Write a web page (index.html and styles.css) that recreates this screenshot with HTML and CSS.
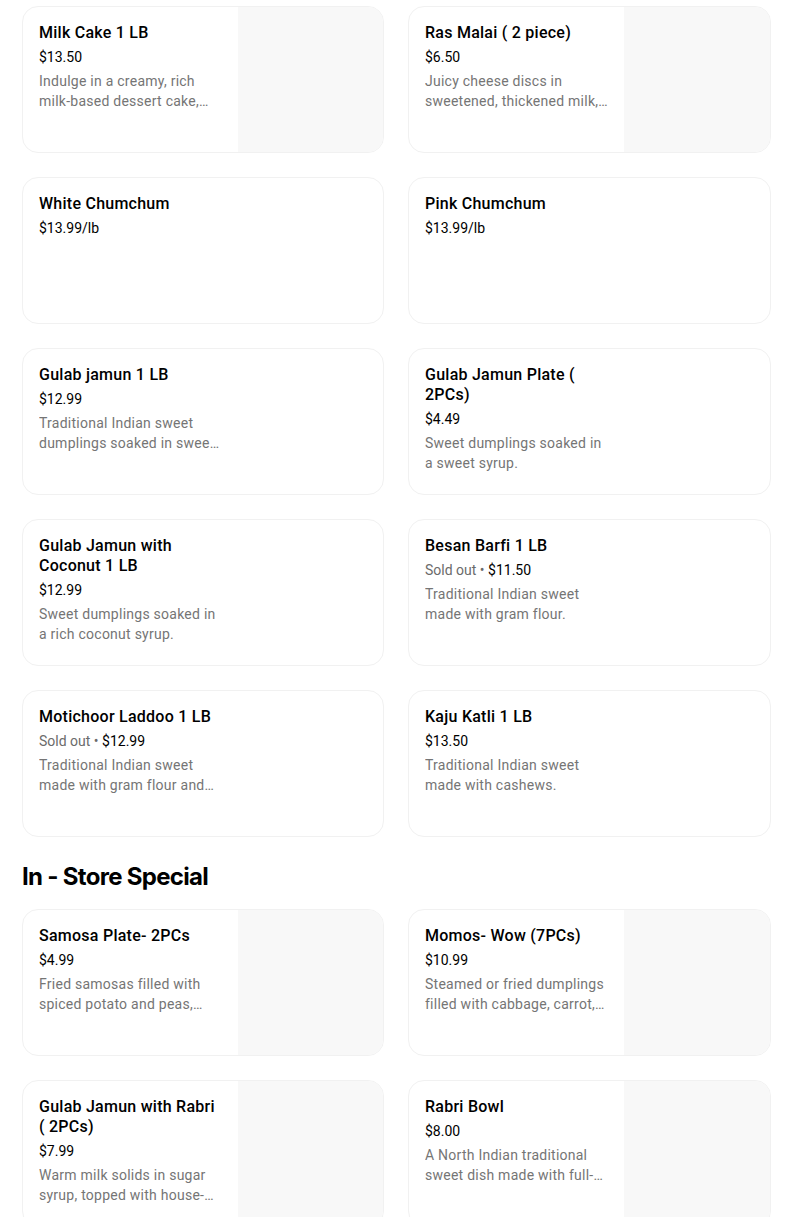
FILE: index.html
```html
<!DOCTYPE html>
<html>
<head>
<meta charset="utf-8">
<link rel="stylesheet" href="styles.css">
</head>
<body>
<div class="page">
  <div class="grid">
    <div class="card">
      <div class="info">
        <div class="title">Milk Cake 1 LB</div>
        <div class="price">$13.50</div>
        <div class="desc">Indulge in a creamy, rich milk-based dessert cake, made with slow-cooked milk and sugar.</div>
      </div>
      <div class="photo"></div>
    </div>
    <div class="card">
      <div class="info">
        <div class="title">Ras Malai ( 2 piece)</div>
        <div class="price">$6.50</div>
        <div class="desc">Juicy cheese discs in sweetened, thickened milk, flavored with cardamom.</div>
      </div>
      <div class="photo"></div>
    </div>
    <div class="card">
      <div class="info">
        <div class="title">White Chumchum</div>
        <div class="price">$13.99/lb</div>
      </div>
    </div>
    <div class="card">
      <div class="info">
        <div class="title">Pink Chumchum</div>
        <div class="price">$13.99/lb</div>
      </div>
    </div>
    <div class="card">
      <div class="info">
        <div class="title">Gulab jamun 1 LB</div>
        <div class="price">$12.99</div>
        <div class="desc">Traditional Indian sweet dumplings soaked in sweet syrup.</div>
      </div>
    </div>
    <div class="card">
      <div class="info">
        <div class="title">Gulab Jamun Plate ( 2PCs)</div>
        <div class="price">$4.49</div>
        <div class="desc">Sweet dumplings soaked in a sweet syrup.</div>
      </div>
    </div>
    <div class="card">
      <div class="info">
        <div class="title">Gulab Jamun with Coconut 1 LB</div>
        <div class="price">$12.99</div>
        <div class="desc">Sweet dumplings soaked in a rich coconut syrup.</div>
      </div>
    </div>
    <div class="card">
      <div class="info">
        <div class="title">Besan Barfi 1 LB</div>
        <div class="price"><span class="sold">Sold out • </span>$11.50</div>
        <div class="desc">Traditional Indian sweet made with gram flour.</div>
      </div>
    </div>
    <div class="card">
      <div class="info">
        <div class="title">Motichoor Laddoo 1 LB</div>
        <div class="price"><span class="sold">Sold out • </span>$12.99</div>
        <div class="desc">Traditional Indian sweet made with gram flour and sugar syrup.</div>
      </div>
    </div>
    <div class="card">
      <div class="info">
        <div class="title">Kaju Katli 1 LB</div>
        <div class="price">$13.50</div>
        <div class="desc">Traditional Indian sweet made with cashews.</div>
      </div>
    </div>
  </div>

  <h2 class="section-title">In - Store Special</h2>

  <div class="grid">
    <div class="card">
      <div class="info">
        <div class="title">Samosa Plate- 2PCs</div>
        <div class="price">$4.99</div>
        <div class="desc">Fried samosas filled with spiced potato and peas, served with chutney.</div>
      </div>
      <div class="photo"></div>
    </div>
    <div class="card">
      <div class="info">
        <div class="title">Momos- Wow (7PCs)</div>
        <div class="price">$10.99</div>
        <div class="desc">Steamed or fried dumplings filled with cabbage, carrot, and onion.</div>
      </div>
      <div class="photo"></div>
    </div>
    <div class="card">
      <div class="info">
        <div class="title">Gulab Jamun with Rabri ( 2PCs)</div>
        <div class="price">$7.99</div>
        <div class="desc">Warm milk solids in sugar syrup, topped with house-made rabri.</div>
      </div>
      <div class="photo"></div>
    </div>
    <div class="card">
      <div class="info">
        <div class="title">Rabri Bowl</div>
        <div class="price">$8.00</div>
        <div class="desc">A North Indian traditional sweet dish made with full-fat milk.</div>
      </div>
      <div class="photo"></div>
    </div>
  </div>
</div>
</body>
</html>
```
FILE: styles.css
```css
* { box-sizing: border-box; }
html, body { margin: 0; padding: 0; background: #fff; }
body {
  font-family: "Roboto", "Liberation Sans", sans-serif;
  color: #000;
  overflow: hidden;
}
.page {
  width: 771px;
  padding: 6px 0 0 22px;
}
.grid {
  display: grid;
  grid-template-columns: 362px 363px;
  column-gap: 24px;
  row-gap: 24px;
}
.card {
  display: flex;
  height: 147px;
  border: 1px solid #f1f1f1;
  border-radius: 16px;
  overflow: hidden;
  background: #fff;
}
.info {
  width: 215px;
  flex: none;
  padding: 16px 16px 0 16px;
}
.photo {
  flex: 1;
  background: #f8f8f8;
}
.title {
  font-size: 16px;
  line-height: 20px;
  font-weight: 500;
  letter-spacing: 0.25px;
  color: #000;
}
.price {
  margin-top: 4px;
  font-size: 14px;
  line-height: 20px;
  color: #000;
}
.sold { color: #6b6b6b; }
.desc {
  margin-top: 4px;
  font-size: 14px;
  line-height: 20px;
  letter-spacing: 0.25px;
  color: #757575;
  display: -webkit-box;
  -webkit-line-clamp: 2;
  -webkit-box-orient: vertical;
  overflow: hidden;
}
.section-title {
  margin: 24px 0 16px 0;
  font-family: "Inter", "Roboto", sans-serif;
  font-size: 24px;
  line-height: 32px;
  font-weight: 700;
  letter-spacing: -0.7px;
}
```
